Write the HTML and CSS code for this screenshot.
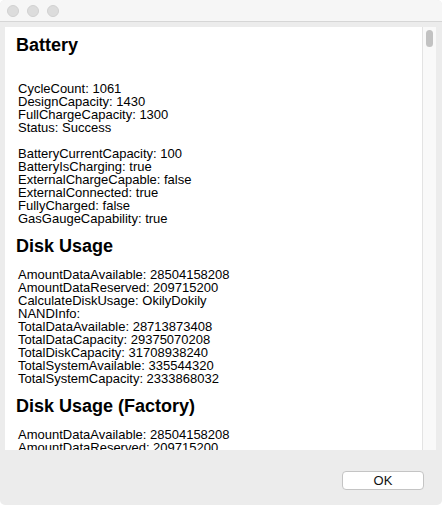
FILE: index.html
```
<!DOCTYPE html>
<html>
<head>
<meta charset="utf-8">
<link rel="stylesheet" href="styles.css">
</head>
<body>
<div class="window">
  <div class="titlebar">
    <span class="light"></span><span class="light"></span><span class="light"></span>
  </div>
  <div class="main">
    <div class="scrollview">
      <div class="content">
        <h2 class="heading">Battery</h2>
        <div class="block first">
          <div>CycleCount: 1061</div>
          <div>DesignCapacity: 1430</div>
          <div>FullChargeCapacity: 1300</div>
          <div>Status: Success</div>
          <div class="blank"></div>
          <div>BatteryCurrentCapacity: 100</div>
          <div>BatteryIsCharging: true</div>
          <div>ExternalChargeCapable: false</div>
          <div>ExternalConnected: true</div>
          <div>FullyCharged: false</div>
          <div>GasGaugeCapability: true</div>
        </div>
        <h2 class="heading">Disk Usage</h2>
        <div class="block">
          <div>AmountDataAvailable: 28504158208</div>
          <div>AmountDataReserved: 209715200</div>
          <div>CalculateDiskUsage: OkilyDokily</div>
          <div>NANDInfo:</div>
          <div>TotalDataAvailable: 28713873408</div>
          <div>TotalDataCapacity: 29375070208</div>
          <div>TotalDiskCapacity: 31708938240</div>
          <div>TotalSystemAvailable: 335544320</div>
          <div>TotalSystemCapacity: 2333868032</div>
        </div>
        <h2 class="heading">Disk Usage (Factory)</h2>
        <div class="block">
          <div>AmountDataAvailable: 28504158208</div>
          <div>AmountDataReserved: 209715200</div>
          <div>CalculateDiskUsage: OkilyDokily</div>
          <div>NANDInfo:</div>
        </div>
      </div>
      <div class="track"><div class="thumb"></div></div>
    </div>
  </div>
  <div class="footer">
    <button class="ok">OK</button>
  </div>
</div>
</body>
</html>
```
FILE: styles.css
```
html, body {
  margin: 0;
  padding: 0;
  background: #ffffff;
}
body {
  font-family: "Liberation Sans", Arial, sans-serif;
  color: #000;
}
.window {
  width: 442px;
  height: 505px;
  background: #ececec;
  border-radius: 5px;
  overflow: hidden;
  display: flex;
  flex-direction: column;
}
.titlebar {
  flex: none;
  height: 22px;
  box-sizing: border-box;
  background: #f6f6f6;
  border-bottom: 1px solid #d6d6d6;
  display: flex;
  align-items: center;
  gap: 8px;
  padding-left: 7px;
}
.light {
  width: 12px;
  height: 12px;
  border-radius: 50%;
  background: #dcdcdc;
  box-sizing: border-box;
  border: 1px solid #d0d0d0;
}
.main {
  padding: 5px 6px 0 5px;
  flex: none;
}
.scrollview {
  height: 423px;
  display: flex;
  background: #fff;
}
.content {
  flex: 1;
  overflow: hidden;
  padding: 8px 0 0 11px;
}
.heading {
  margin: 0;
  font-size: 18px;
  line-height: 21px;
  font-weight: bold;
}
.block {
  font-size: 13px;
  line-height: 13px;
  padding-left: 2px;
  margin-top: 11px;
  margin-bottom: 11px;
}
.block.first {
  margin-top: 26px;
}
.blank {
  height: 13px;
}
.track {
  width: 13px;
  flex: none;
  background: #f9f9f9;
  border-left: 1px solid #e3e3e3;
  padding-top: 3px;
  display: flex;
  justify-content: center;
}
.thumb {
  width: 7px;
  height: 17px;
  border-radius: 4px;
  background: #c2c2c2;
}
.footer {
  flex: 1;
  display: flex;
  justify-content: flex-end;
  align-items: flex-start;
  padding: 21px 18px 0 0;
}
.ok {
  width: 82px;
  height: 19px;
  background: #fff;
  border: 1px solid #c4c4c4;
  border-radius: 4px;
  font-family: "Liberation Sans", Arial, sans-serif;
  font-size: 13px;
  color: #111;
  padding: 0;
  line-height: 17px;
}
```
